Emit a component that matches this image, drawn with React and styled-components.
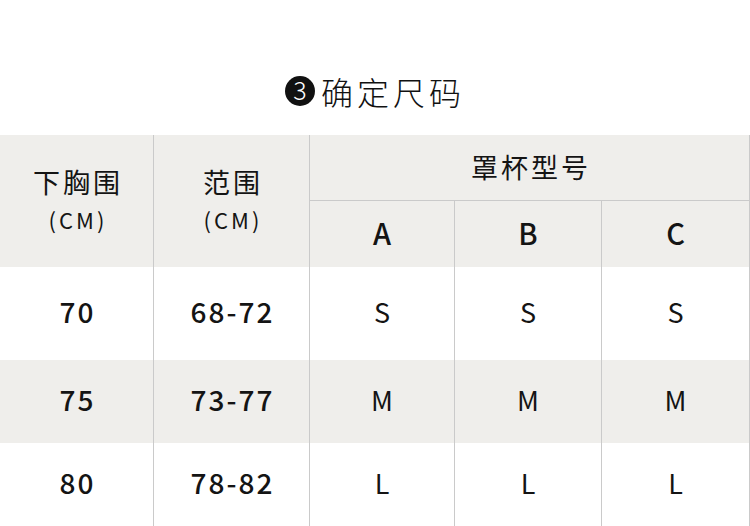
import React from "react";
import styled, { createGlobalStyle } from "styled-components";

const Global = createGlobalStyle`
  html, body { margin: 0; padding: 0; background: #fff; }
  body { font-family: "Noto Sans CJK SC", "Noto Sans", sans-serif; color: #141414; }
  * { box-sizing: border-box; }
`;

const Page = styled.div`
  width: 750px;
  height: 526px;
  overflow: hidden;
  background: #fff;
`;

const TitleBar = styled.div`
  height: 135px;
  padding-top: 46px;
  display: flex;
  justify-content: center;
  align-items: center;
  gap: 6px;
`;

const StepBadge = styled.span`
  width: 30px;
  height: 30px;
  border-radius: 50%;
  background: #111;
  color: #fff;
  display: flex;
  align-items: center;
  justify-content: center;
  font-size: 25px;
  font-weight: 300;
  line-height: 1;
  padding-bottom: 2px;
`;

const TitleText = styled.h1`
  margin: 0;
  font-size: 32px;
  font-weight: 300;
  letter-spacing: 4px;
  line-height: 1;
  color: #111;
`;

const Table = styled.div`
  display: grid;
  grid-template-columns: 153px 156px 145px 147px 149px;
  grid-template-rows: 66px 66px 93px 83px 83px;
`;

const Cell = styled.div`
  display: flex;
  flex-direction: column;
  align-items: center;
  justify-content: center;
  background: ${(p) => (p.$shade ? "#efeeeb" : "#fff")};
  border-left: ${(p) => (p.$first ? "none" : "1px solid #cacaca")};
  border-right: ${(p) => (p.$last ? "1px solid #cacaca" : "none")};
  grid-column: ${(p) => p.$col || "auto"};
  grid-row: ${(p) => p.$row || "auto"};
`;

const HeadCell = styled(Cell)`
  padding-bottom: 4px;
`;

const CupTitle = styled(Cell)`
  border-bottom: 1px solid #cacaca;
  padding-bottom: 3px;
`;

const HeadLabel = styled.div`
  font-size: 27px;
  font-weight: 400;
  letter-spacing: 3px;
  line-height: 1;
  padding-left: 3px;
`;

const Unit = styled.div`
  font-size: 22px;
  font-weight: 400;
  letter-spacing: 3px;
  line-height: 1;
  margin-top: 13px;
  padding-left: 3px;
`;

const CupLetter = styled.div`
  font-size: 29px;
  font-weight: 500;
  line-height: 1;
  padding-bottom: 4px;
`;

const Number = styled.div`
  font-size: 28px;
  font-weight: 500;
  letter-spacing: 2px;
  line-height: 1;
  padding-left: 2px;
  padding-bottom: 5px;
`;

const Size = styled.div`
  font-size: 27px;
  font-weight: 400;
  line-height: 1;
  padding-bottom: 5px;
`;

const rows = [
  { under: "70", range: "68-72", size: "S" },
  { under: "75", range: "73-77", size: "M" },
  { under: "80", range: "78-82", size: "L" },
];

export default function App() {
  return (
    <Page>
      <Global />
      <TitleBar>
        <StepBadge>3</StepBadge>
        <TitleText>确定尺码</TitleText>
      </TitleBar>
      <Table>
        <HeadCell $shade $first $row="1 / 3" $col="1">
          <HeadLabel>下胸围</HeadLabel>
          <Unit>(CM)</Unit>
        </HeadCell>
        <HeadCell $shade $row="1 / 3" $col="2">
          <HeadLabel>范围</HeadLabel>
          <Unit>(CM)</Unit>
        </HeadCell>
        <CupTitle $shade $last $row="1" $col="3 / 6">
          <HeadLabel>罩杯型号</HeadLabel>
        </CupTitle>
        {["A", "B", "C"].map((c, i) => (
          <Cell key={c} $shade $last={i === 2} $row="2">
            <CupLetter>{c}</CupLetter>
          </Cell>
        ))}
        {rows.map((r, ri) => {
          const shade = ri % 2 === 1;
          return (
            <React.Fragment key={r.under}>
              <Cell $shade={shade} $first>
                <Number>{r.under}</Number>
              </Cell>
              <Cell $shade={shade}>
                <Number>{r.range}</Number>
              </Cell>
              {[0, 1, 2].map((k) => (
                <Cell key={k} $shade={shade} $last={k === 2}>
                  <Size>{r.size}</Size>
                </Cell>
              ))}
            </React.Fragment>
          );
        })}
      </Table>
    </Page>
  );
}
